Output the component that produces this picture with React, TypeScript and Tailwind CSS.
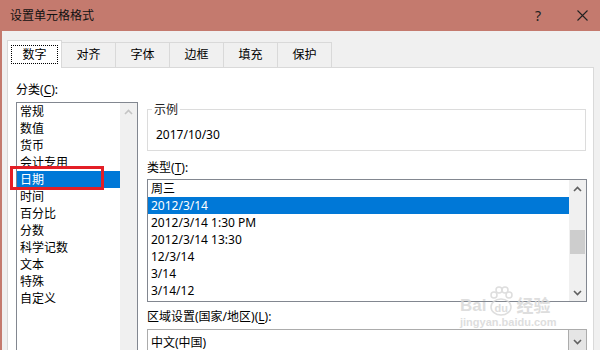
const FONT = "font-['Noto_Sans','Noto_Sans_CJK_SC',sans-serif]";

const CATEGORIES = ['常规', '数值', '货币', '会计专用', '日期', '时间', '百分比', '分数', '科学记数', '文本', '特殊', '自定义'];
const TYPES = ['周三', '2012/3/14', '2012/3/14 1:30 PM', '2012/3/14 13:30', '12/3/14', '3/14', '3/14/12'];
const TABS = ['对齐', '字体', '边框', '填充', '保护'];

function Chevron({ up, faded }: { up?: boolean; faded?: boolean }) {
  return (
    <svg width="9" height="6" viewBox="0 0 9 6">
      <path
        d={up ? 'M1 5 L4.5 1.5 L8 5' : 'M1 1 L4.5 4.5 L8 1'}
        fill="none"
        stroke={faded ? '#c4c4c4' : '#606060'}
        strokeWidth="1.6"
      />
    </svg>
  );
}

function Label({ text, hotkey }: { text: string; hotkey: string }) {
  return (
    <div className="h-[17px] leading-[17px] text-[12px] text-black">
      {text}(<span className="underline underline-offset-2">{hotkey}</span>):
    </div>
  );
}

export default function App() {
  return (
    <div className={`${FONT} relative w-[600px] h-[350px] overflow-hidden bg-[#f0f0f0] border-l-2 border-[#c47a6e]`}>
      {/* title bar */}
      <div className="h-[31px] bg-[#c47a6e] flex items-center pl-[8px] pr-[12px]">
        <span className="text-[12px] text-[#111]">设置单元格格式</span>
        <span className="ml-auto text-[14px] text-[#222] mr-[36px]">?</span>
        <svg width="11" height="11" viewBox="0 0 11 11">
          <path d="M0.5 0.5 L10.5 10.5 M10.5 0.5 L0.5 10.5" stroke="#222" strokeWidth="1.1" />
        </svg>
      </div>

      {/* tabs */}
      <div className="h-[36px] flex items-end pl-[5px] relative z-10">
        <div className="h-[28px] w-[55px] -mb-px bg-white border border-b-0 border-[#d9d9d9] flex items-center justify-center">
          <span className="border border-dotted border-black px-[10px] h-[19px] leading-[17px] text-[12px]">数字</span>
        </div>
        {TABS.map((t, i) => (
          <div
            key={t}
            className={`h-[25px] w-[54px] bg-[#f0f0f0] border-t border-r border-[#d9d9d9] flex items-center justify-center text-[12px] text-black ${i === 0 ? '' : ''}`}
          >
            {t}
          </div>
        ))}
      </div>

      {/* panel */}
      <div className="ml-[5px] w-[587px] h-[300px] bg-white border border-[#d9d9d9] flex pl-[8px] pt-[13px]">
        {/* left column */}
        <div className="w-[122px] flex flex-col">
          <Label text="分类" hotkey="C" />
          <div className="mt-[4px] h-[260px] border border-[#828790] flex">
            <div className="flex-1">
              {CATEGORIES.map((c) => (
                <div
                  key={c}
                  className={`h-[17px] leading-[17px] text-[12px] pl-[3px] ${c === '日期' ? 'bg-[#0078d7] text-white' : 'text-black'}`}
                >
                  {c}
                </div>
              ))}
            </div>
            <div className="w-[17px] bg-[#f0f0f0] flex justify-center pt-[6px]">
              <div className="h-[6px]">
                <Chevron up faded />
              </div>
            </div>
          </div>
        </div>

        {/* right column */}
        <div className="ml-[9px] w-[440px] flex flex-col">
          <div className="mt-[28px] relative h-[42px] w-[439px] border border-[#dcdcdc] flex items-center pl-[8px] pt-[9px]">
            <span className="absolute -top-[9px] left-[4px] bg-white px-[2px] text-[12px] leading-[17px] text-[#222]">示例</span>
            <span className="text-[12px] leading-[17px] text-black">2017/10/30</span>
          </div>

          <div className="mt-[8px]">
            <Label text="类型" hotkey="T" />
          </div>
          <div className="mt-[3px] h-[123px] border border-[#828790] flex">
            <div className="flex-1">
              {TYPES.map((t, i) => (
                <div
                  key={t}
                  className={`h-[17px] leading-[17px] text-[12px] pl-[3px] ${i === 1 ? 'bg-[#0078d7] text-white' : 'text-black'}`}
                >
                  {t}
                </div>
              ))}
            </div>
            <div className="w-[17px] bg-[#f0f0f0] flex flex-col items-center">
              <div className="h-[17px] flex items-center justify-center">
                <Chevron up />
              </div>
              <div className="mt-[33px] h-[24px] w-[15px] bg-[#cdcdcd]" />
              <div className="mt-auto h-[17px] flex items-center justify-center">
                <Chevron />
              </div>
            </div>
          </div>

          <div className="mt-[6px]">
            <Label text="区域设置(国家/地区)" hotkey="L" />
          </div>
          <div className="mt-[4px] h-[26px] border border-[#acacac] flex">
            <div className="flex-1 pl-[3px] pt-[4px] text-[12px] leading-[17px] text-black">中文(中国)</div>
            <div className="w-[18px] bg-[#e5e5e5] border-l border-[#acacac] flex items-center justify-center">
              <Chevron />
            </div>
          </div>
        </div>
      </div>

      {/* highlight annotation */}
      <div className="absolute left-[8px] top-[166px] w-[94px] h-[24px] border-[3px] border-[#e31e26]" />

      {/* watermark */}
      <div className="absolute left-[458px] top-[286px] text-[#d6d6d6] opacity-80 pointer-events-none">
        <div className="flex items-end gap-[2px]">
          <span className="text-[17px] font-bold leading-[20px] font-['Liberation_Sans',sans-serif]">Bai</span>
          <span className="relative w-[26px] h-[30px]">
            <svg width="26" height="30" viewBox="0 0 26 30" className="absolute left-0 top-0">
              <circle cx="6" cy="9" r="3" fill="none" stroke="#d6d6d6" strokeWidth="1.5" />
              <circle cx="11" cy="4" r="3" fill="none" stroke="#d6d6d6" strokeWidth="1.5" />
              <circle cx="17" cy="4" r="3" fill="none" stroke="#d6d6d6" strokeWidth="1.5" />
              <circle cx="21" cy="9" r="3" fill="none" stroke="#d6d6d6" strokeWidth="1.5" />
              <ellipse cx="13" cy="21" rx="10" ry="8" fill="none" stroke="#d6d6d6" strokeWidth="1.5" />
            </svg>
            <span className="absolute left-[6px] top-[14px] text-[11px] font-bold font-['Liberation_Sans',sans-serif]">du</span>
          </span>
          <span className="text-[17px] font-bold leading-[20px]">经验</span>
        </div>
        <div className="text-[11px] leading-[13px] font-['Liberation_Sans',sans-serif] font-bold">jingyan.baidu.com</div>
      </div>
    </div>
  );
}
